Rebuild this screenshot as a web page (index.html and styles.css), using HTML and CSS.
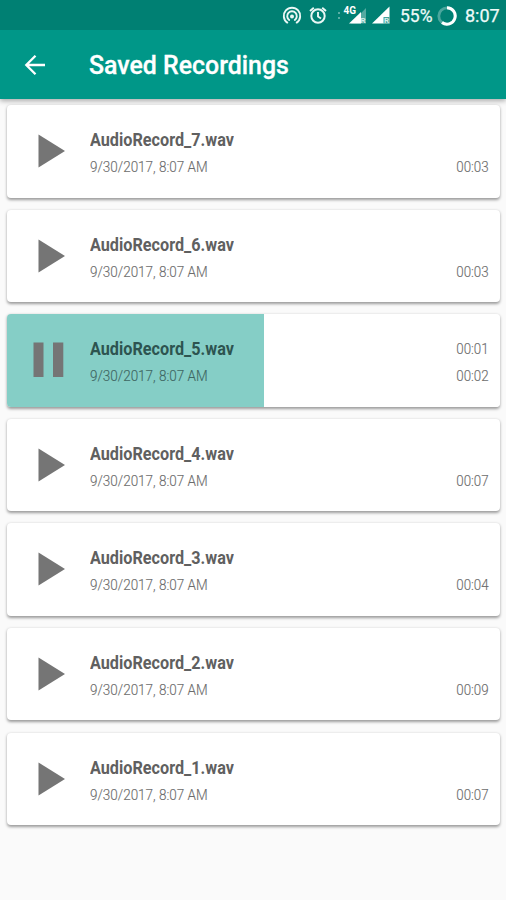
FILE: index.html
```html
<!DOCTYPE html>
<html lang="en">
<head>
<meta charset="utf-8">
<title>Saved Recordings</title>
<link rel="stylesheet" href="styles.css">
</head>
<body>
<header>
  <div class="status">
    <svg class="status-icons" width="122" height="30" viewBox="0 0 122 30" fill="none" stroke="#eaf7f5">
      <g stroke-width="1.900" stroke-linecap="round">
        <path d="M6.300 22.600A8.200 8.200 0 1 1 15.700 22.600"/>
        <path d="M8.200 20A4.800 4.800 0 1 1 13.800 20"/>
      </g>
      <circle cx="11" cy="16.500" r="2" fill="#eaf7f5" stroke="none"/>
      <circle cx="37" cy="16" r="6.700" stroke-width="2"/>
      <path d="M37 12v4.500l3 2M29 11l3.800-3.300M45 11l-3.800-3.300" stroke-width="1.900"/>
      <path d="M57 13h2M57 18h2" stroke="#5aaea5" stroke-width="2"/>
      <path d="M85 8v15.500H70z" fill="#55aaa1" stroke="none"/>
      <path d="M80 12v11.500H68z" fill="#fff" stroke="none"/>
      <text class="badge" x="62.500" y="14">4G</text>
      <text class="roam" x="79.500" y="23.300">R</text>
      <path d="M108.500 6.500v17H91z" fill="#fff" stroke="none"/>
      <path d="M102.500 17h6v6.500h-6z" fill="#45a197" stroke="none"/>
      <text class="roam" x="103" y="23.300">R</text>
    </svg>
    <span class="battery-text">55%</span>
    <svg class="battery" width="20" height="20" viewBox="0 0 20 20" fill="none">
      <circle cx="10" cy="10" r="8.200" stroke="#4ba69d" stroke-width="2.800"/>
      <path d="M10 1.800A8.200 8.200 0 1 1 5 16.500" stroke="#fff" stroke-width="3"/>
    </svg>
    <span class="clock">8:07</span>
  </div>
  <div class="toolbar">
    <svg class="back" width="22" height="22" viewBox="0 0 22 22" fill="none" stroke="#fff" stroke-width="2.300"><path d="M21 11H2.500M11.500 1.800L2.300 11l9.200 9.200"/></svg>
    <h1>Saved Recordings</h1>
  </div>
</header>
<main>
  <article class="card"><svg class="icon" viewBox="0 0 36 36"><path d="M7.500 1.500L34 18 7.500 34.500z"/></svg><div class="info"><p class="name">AudioRecord_7.wav</p><p class="date">9/30/2017, 8:07 AM</p></div><div class="times"><p></p><p>00:03</p></div></article>
  <article class="card"><svg class="icon" viewBox="0 0 36 36"><path d="M7.500 1.500L34 18 7.500 34.500z"/></svg><div class="info"><p class="name">AudioRecord_6.wav</p><p class="date">9/30/2017, 8:07 AM</p></div><div class="times"><p></p><p>00:03</p></div></article>
  <article class="card playing"><svg class="icon" viewBox="0 0 36 36"><path d="M2.500 .5h10v34.500h-10zM22 .5h10.300v34.500H22z"/></svg><div class="info"><p class="name">AudioRecord_5.wav</p><p class="date">9/30/2017, 8:07 AM</p></div><div class="times"><p>00:01</p><p>00:02</p></div></article>
  <article class="card"><svg class="icon" viewBox="0 0 36 36"><path d="M7.500 1.500L34 18 7.500 34.500z"/></svg><div class="info"><p class="name">AudioRecord_4.wav</p><p class="date">9/30/2017, 8:07 AM</p></div><div class="times"><p></p><p>00:07</p></div></article>
  <article class="card"><svg class="icon" viewBox="0 0 36 36"><path d="M7.500 1.500L34 18 7.500 34.500z"/></svg><div class="info"><p class="name">AudioRecord_3.wav</p><p class="date">9/30/2017, 8:07 AM</p></div><div class="times"><p></p><p>00:04</p></div></article>
  <article class="card"><svg class="icon" viewBox="0 0 36 36"><path d="M7.500 1.500L34 18 7.500 34.500z"/></svg><div class="info"><p class="name">AudioRecord_2.wav</p><p class="date">9/30/2017, 8:07 AM</p></div><div class="times"><p></p><p>00:09</p></div></article>
  <article class="card"><svg class="icon" viewBox="0 0 36 36"><path d="M7.500 1.500L34 18 7.500 34.500z"/></svg><div class="info"><p class="name">AudioRecord_1.wav</p><p class="date">9/30/2017, 8:07 AM</p></div><div class="times"><p></p><p>00:07</p></div></article>
</main>
</body>
</html>
```
FILE: styles.css
```css
* { box-sizing: border-box; }
body { margin: 0; height: 900px; overflow: hidden; background: #fafafa; font-family: Roboto, "Liberation Sans", sans-serif; }
h1, p { margin: 0; }
header { height: 99px; background: #009788; color: #fff; box-shadow: 0 2px 5px rgba(0,0,0,.32); }
.status { height: 30px; background: #008073; display: flex; align-items: center; padding-left: 281px; color: #effaf8; font-size: 18px; white-space: nowrap; }
.status-icons, .battery { flex: none; display: block; }
.battery-text { width: 35px; margin-left: -3px; line-height: 32px; font-size: 17.500px; padding-top: 2px; -webkit-text-stroke: .25px; }
.battery { margin: 1px 0 0 2px; }
.clock { margin-left: 8px; line-height: 32px; padding-top: 2px; -webkit-text-stroke: .25px; }
.badge { fill: #fff; stroke: none; font-weight: 700; font-size: 10px; }
.roam { fill: #d5efec; stroke: none; font-weight: 700; font-size: 8px; }
.toolbar { height: 69px; display: flex; align-items: center; padding: 1px 0 0 24px; }
.back { margin-top: -1px; }
h1 { margin: 2px 0 0 43px; font-size: 24.900px; line-height: 30px; font-weight: 500; white-space: nowrap; -webkit-text-stroke: .3px; }
main { padding: 6px 6px 0 7px; display: grid; gap: 12.100px; }
.card { height: 92.500px; display: flex; background: #fff; border-radius: 4px; padding: 24px 11.500px 0 24px; box-shadow: 0 1.500px 3px rgba(0,0,0,.38); color: #6c6c6c; }
.playing { background: linear-gradient(90deg, #85cec6 257px, #fff 257px); }
.icon { width: 36px; height: 36px; flex: none; margin-top: 4px; fill: #757575; }
.info { width: 200px; margin-left: 23px; }
.info p { width: max-content; transform-origin: 0 50%; white-space: nowrap; }
.name { font-size: 18px; line-height: 22px; font-weight: 700; color: #606060; transform: scaleX(.9); }
.date { margin-top: 5px; font-size: 15.500px; line-height: 22px; font-weight: 300; -webkit-text-stroke: .15px; transform: scaleX(.87); }
.playing .name { color: #2d5450; }
.playing .date { color: #3e6662; }
.times { margin-left: auto; font-size: 15.500px; line-height: 22px; font-weight: 300; -webkit-text-stroke: .15px; text-align: right; }
.times p { height: 22px; transform: scaleX(.86); transform-origin: 100% 50%; }
.times p + p { margin-top: 5px; }
```
